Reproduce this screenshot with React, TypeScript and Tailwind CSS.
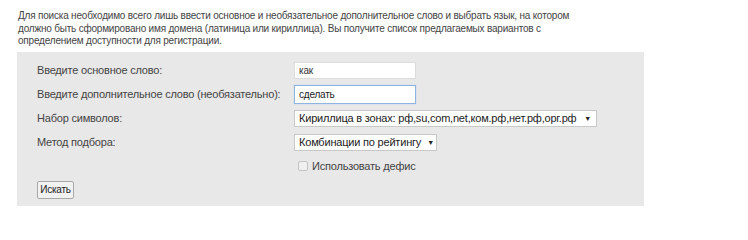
import { ChangeEvent, useState } from "react";

const font = { fontFamily: '"Liberation Sans", Arial, sans-serif' };

function Row({ label, children }: { label: string; children: React.ReactNode }) {
  return (
    <div className="flex items-center h-[24px]">
      <div className="w-[257px] shrink-0 text-[#444] whitespace-nowrap">{label}</div>
      <div className="flex items-center">{children}</div>
    </div>
  );
}

function FakeSelect({ value, width }: { value: string; width: string }) {
  return (
    <div
      className={`${width} h-[17px] bg-white border border-[#c8c8c8] flex items-center justify-between pl-[4px] pr-[5px] text-[#222] whitespace-nowrap`}
    >
      <span>{value}</span>
      <span className="text-[7px] leading-none ml-[6px]">▼</span>
    </div>
  );
}

export default function App() {
  const [main, setMain] = useState("как");
  const [extra, setExtra] = useState("сделать");

  return (
    <div
      className="w-[748px] h-[240px] bg-white pt-[10px] pl-[17px] text-[10px] tracking-[-0.2px]"
      style={font}
    >
      <p className="text-[#444] leading-[12.5px] h-[42px] pl-[1px]">
        Для поиска необходимо всего лишь ввести основное и необязательное дополнительное слово и выбрать язык, на котором
        <br />
        должно быть сформировано имя домена (латиница или кириллица). Вы получите список предлагаемых вариантов с
        <br />
        определением доступности для регистрации.
      </p>

      <div className="w-[627px] h-[154px] bg-[#e8e8e8] pt-[6px] pl-[20px] text-[11px]">
        <Row label="Введите основное слово:">
          <input
            value={main}
            onChange={(e: ChangeEvent<HTMLInputElement>) => setMain(e.target.value)}
            className="w-[122px] h-[17px] bg-white border border-[#dcdcdc] px-[4px] text-[10px] text-[#333] outline-none"
          />
        </Row>
        <Row label="Введите дополнительное слово (необязательно):">
          <input
            value={extra}
            onChange={(e: ChangeEvent<HTMLInputElement>) => setExtra(e.target.value)}
            className="w-[122px] h-[19px] bg-white border border-[#8fb4e0] shadow-[0_0_1px_#9cc0ea] px-[4px] text-[10px] text-[#222] outline-none"
          />
        </Row>
        <Row label="Набор символов:">
          <FakeSelect width="w-[303px]" value="Кириллица в зонах: рф,su,com,net,ком.рф,нет.рф,орг.рф" />
        </Row>
        <Row label="Метод подбора:">
          <FakeSelect width="w-[143px]" value="Комбинации по рейтингу" />
        </Row>
        <div className="flex items-center h-[24px] pl-[261px] text-[#444]">
          <span className="w-[10px] h-[10px] border border-[#c4c4c4] bg-[#efefef] rounded-[2px] mr-[4px]" />
          Использовать дефис
        </div>
        <div className="mt-[3px]">
          <button className="h-[18px] w-[37px] bg-[#f2f2f2] border border-[#a8a8a8] rounded-[2px] text-[10px] text-[#222] leading-none">
            Искать
          </button>
        </div>
      </div>
    </div>
  );
}
